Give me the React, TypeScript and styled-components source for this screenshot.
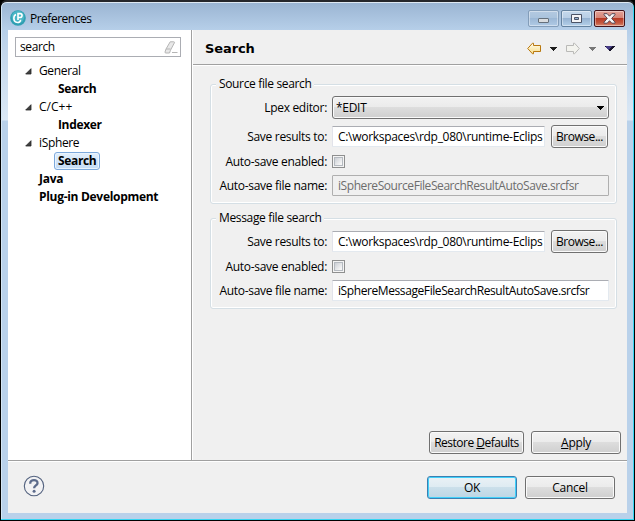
import React from "react";
import styled, { createGlobalStyle, css } from "styled-components";

const Global = createGlobalStyle`
  * { box-sizing: border-box; }
  html, body { margin: 0; padding: 0; background: #000; overflow: hidden; }
  body { font: 12px/16px "Open Sans", "Noto Sans", sans-serif; color: #000; }
`;

const Window = styled.div`
  width: 635px;
  height: 521px;
  border: 1px solid #000;
  border-top: 2px solid #26272b;
  border-radius: 7px 7px 0 0;
  padding: 0 7px 7px 7px;
  display: flex;
  flex-direction: column;
  background: linear-gradient(#9ab4d2, #b6cfe9 28px, #c3d7ec 50px, #dbe8f5 118px, #b9d1ea 119px);
  box-shadow: inset -1px -1px 0 #35d5f2, inset 1px 0 0 #d5e6f4, inset 0 1px 0 #dfe9f3;
`;

const TitleBar = styled.header`
  height: 28px;
  flex: none;
  display: flex;
  align-items: flex-start;
  padding: 0 2px 0 2px;
`;

const Text = styled.span<{ $ls?: number; $bold?: boolean }>`
  letter-spacing: ${(p) => p.$ls ?? -0.3}px;
  font-weight: ${(p) => (p.$bold ? 700 : 400)};
  white-space: nowrap;
`;

const TitleText = styled(Text)`
  margin: 9px auto 0 4px;
`;

const AppIcon = styled.svg`
  margin-top: 8px;
`;

const Captions = styled.div`
  display: flex;
  gap: 2px;
  margin-top: 8px;
`;

const Caption = styled.button<{ $kind: "min" | "max" | "close" }>`
  width: 31px;
  height: 17px;
  padding: 0;
  display: grid;
  place-items: center;
  border-radius: 2px;
  box-shadow: inset 0 0 0 1px rgba(255, 255, 255, 0.4);
  ${(p) =>
    p.$kind === "close"
      ? css`
          border: 1px solid #43141c;
          background: linear-gradient(#e4a196, #d58477 47%, #b83a25 50%, #c55941 80%, #d98b73);
        `
      : p.$kind === "max"
        ? css`
            border: 1px solid #64829f;
            background: linear-gradient(#c5d9ec, #b8cee5 47%, #96b3d2 50%, #b4d0e9);
          `
        : css`
            border: 1px solid #839db9;
            padding-top: 3px;
            background: linear-gradient(#b3c9e0, #aac3dd 47%, #9cb8d6 50%, #b0cae5);
          `}
`;

const Client = styled.div`
  flex: 1;
  display: flex;
  flex-direction: column;
  min-height: 0;
  background: #f0f0f0;
`;

const Main = styled.div`
  height: 431px;
  flex: none;
  display: flex;
  border-bottom: 1px solid #a0a0a0;
`;

const Sidebar = styled.nav`
  width: 184px;
  flex: none;
  padding: 7px 10px 0 7px;
  background: #fff;
  border-right: 1px solid #a0a0a0;
`;

const Filter = styled.div`
  width: 166px;
  height: 20px;
  padding: 0 2px 0 4px;
  border: 1px solid #abadb3;
  display: flex;
  align-items: center;
  justify-content: space-between;
`;

const Tree = styled.ul`
  margin: 5px 0 0;
  padding: 0;
  list-style: none;
`;

const Node = styled.li<{ $depth: number }>`
  height: 18px;
  display: flex;
  align-items: center;
  padding-left: ${(p) => (p.$depth ? 39 : 10)}px;
`;

const Twisty = styled.span`
  width: 10px;
  display: flex;
  padding-top: 1px;
`;

const NodeLabel = styled.span<{ $selected?: boolean }>`
  height: 18px;
  display: flex;
  align-items: center;
  padding: 0 3px;
  border: 1px solid transparent;
  border-radius: 3px;
  ${(p) =>
    p.$selected &&
    css`
      border-color: #7da9dc;
      background: linear-gradient(#e2effc, #c4dcf6);
      box-shadow: inset 0 0 0 1px #eaf4fe;
    `}
`;

const Page = styled.section`
  flex: 1;
  display: flex;
  flex-direction: column;
  border-left: 1px solid #fff;
`;

const PageHeader = styled.div`
  height: 35px;
  flex: none;
  display: flex;
  align-items: center;
  justify-content: space-between;
  padding: 3px 12px 0 12px;
  border-bottom: 1px solid #a0a0a0;
  box-shadow: 0 1px #fff;
`;

const Heading = styled.h1`
  margin: 0;
  font: 700 13px/18px "DejaVu Sans", sans-serif;
  letter-spacing: -0.1px;
`;

const Form = styled.div`
  padding: 19px 10px 0 17px;
  display: flex;
  flex-direction: column;
  gap: 14px;
`;

const Group = styled.fieldset<{ $h: number }>`
  height: ${(p) => p.$h}px;
  margin: 0;
  padding: 0;
  min-width: 0;
  border: 1px solid #d5dfe5;
  border-radius: 3px;
  box-shadow: inset 0 0 0 1px #fff;
  position: relative;
`;

const Legend = styled.div`
  position: absolute;
  top: -9px;
  left: 5px;
  height: 16px;
  padding: 0 3px;
  background: #f0f0f0;
`;

const Rows = styled.div`
  padding: 11px 7px 0 0;
  display: flex;
  flex-direction: column;
`;

const Row = styled.div<{ $h: number }>`
  height: ${(p) => p.$h}px;
  display: grid;
  grid-template-columns: 116px 1fr auto;
  column-gap: 5px;
  align-items: center;
`;

const Label = styled(Text)`
  text-align: right;
`;

const Field = styled.div<{ $disabled?: boolean; $browse?: boolean }>`
  height: 21px;
  padding: 1px ${(p) => (p.$browse ? 1 : 5)}px 0 5px;
  display: flex;
  align-items: center;
  min-width: 0;
  border: 1px solid #e3e9ef;
  border-top-color: #abadb3;
  border-left-color: #e2e3ea;
  border-radius: 1px;
  background: #fff;
  ${(p) =>
    p.$disabled &&
    css`
      color: #6d6d6d;
      background: #f0f0f0;
      border-color: #afafaf;
    `}
`;

const Clip = styled.div`
  flex: 1;
  overflow: hidden;
  white-space: nowrap;
`;

const buttonFace = css`
  border: 1px solid #707070;
  border-radius: 3px;
  background: linear-gradient(#f2f2f2, #ebebeb 49%, #dddddd 50%, #cfcfcf);
  box-shadow: inset 0 0 0 1px #fafafa;
`;

const Button = styled.button<{ $w: number; $primary?: boolean }>`
  ${buttonFace}
  width: ${(p) => p.$w}px;
  height: 23px;
  padding: 0;
  font: inherit;
  color: #000;
  display: flex;
  align-items: center;
  justify-content: center;
  ${(p) =>
    p.$primary &&
    css`
      border-color: #3c7fb1;
      background: linear-gradient(#eaf1f5, #deebf2 49%, #cbdfea 50%, #bcd6e5);
      box-shadow: inset 0 0 0 1px #40d0fa;
    `}
`;

const BrowseButton = styled(Button)`
  margin: 0 1px 0 1px;
`;

const Combo = styled.div`
  ${buttonFace}
  height: 23px;
  grid-column: 2 / 4;
  display: flex;
  align-items: center;
  justify-content: space-between;
  padding: 0 4px 0 3px;
`;

const WideField = styled(Field)`
  grid-column: 2 / 4;
`;

const Check = styled.div`
  width: 13px;
  height: 13px;
  border: 1px solid #8e8f8f;
  background: linear-gradient(135deg, #cbcfd5, #f6f6f6 85%) content-box, #f4f4f4;
  padding: 2px;
  box-shadow: inset 0 0 0 1px #f4f4f4, inset 0 0 0 2px #b5bac0;
`;

const PageActions = styled.div`
  margin-top: auto;
  padding: 0 6px 6px 0;
  display: flex;
  justify-content: flex-end;
  gap: 7px;
`;

const Footer = styled.footer`
  flex: 1;
  border-top: 1px solid #fff;
  display: flex;
  align-items: flex-start;
  padding: 14px 12px 0 15px;
  gap: 8px;
`;

const HelpIcon = styled.svg`
  margin: -1px auto 0 0;
`;

const Arrow = ({ fill = "#000" }: { fill?: string }) => (
  <svg width="7" height="4" viewBox="0 0 7 4" shapeRendering="crispEdges">
    <path d="M0 0h7v1H6v1H5v1H4v1H3V3H2V2H1V1H0z" fill={fill} />
  </svg>
);

const MenuArrow = () => (
  <svg width="10" height="5" viewBox="0 0 10 5" shapeRendering="crispEdges">
    <path d="M0 0h10v1H9v1H8v1H7v1H6v1H4V4H3V3H2V2H1V1H0z" fill="#17142b" />
    <path d="M1 0h6v1H6v1H5v1H4v1H3V3H2V2H1z" fill="#473c86" />
  </svg>
);

const BackArrow = () => (
  <svg width="14" height="13" viewBox="0 0 14 13">
    <defs>
      <linearGradient id="gold" x2="0" y2="1">
        <stop stopColor="#fffdf0" />
        <stop offset="1" stopColor="#f8dc85" />
      </linearGradient>
    </defs>
    <path d="M.7 6.5 5.5 1.2h1v2.3h7v6h-7v2.3h-1z" fill="url(#gold)" stroke="#b9780f" />
  </svg>
);

const ForwardArrow = () => (
  <svg width="14" height="13" viewBox="0 0 14 13">
    <path d="M13.3 6.5 8.5 1.2h-1v2.3h-7v6h7v2.3h1z" fill="#f3f3ee" stroke="#b9b9b7" />
  </svg>
);

const Toolbar = styled.div`
  display: grid;
  grid-template-columns: 14px 7px 14px 7px 10px;
  column-gap: 9px;
  align-items: center;
`;

const tree: { text: string; depth: number; open?: boolean; bold?: boolean; selected?: boolean; ls: number }[] = [
  { text: "General", depth: 0, open: true, ls: -0.35 },
  { text: "Search", depth: 1, bold: true, ls: -0.35 },
  { text: "C/C++", depth: 0, open: true, ls: 0 },
  { text: "Indexer", depth: 1, bold: true, ls: -0.35 },
  { text: "iSphere", depth: 0, open: true, ls: -0.35 },
  { text: "Search", depth: 1, bold: true, selected: true, ls: -0.35 },
  { text: "Java", depth: 0, bold: true, ls: -0.25 },
  { text: "Plug-in Development", depth: 0, bold: true, ls: -0.3 },
];

const PathRow = () => (
  <Row $h={23}>
    <Label>Save results to:</Label>
    <Field $browse>
      <Clip><Text>C:\workspaces\rdp_080\runtime-Eclips</Text></Clip>
    </Field>
    <BrowseButton $w={57}><Text $ls={-0.45}>Browse...</Text></BrowseButton>
  </Row>
);

export default function App() {
  return (
    <>
      <Global />
      <Window>
        <TitleBar>
          <AppIcon width="16" height="16" viewBox="0 0 16 16">
            <circle cx="8" cy="8" r="7.8" fill="#2f9fb2" />
            <circle cx="8" cy="7" r="6.3" fill="#49b5c5" />
            <path d="M6 4.4C3 5.6 3.1 11.4 6.6 12.3c2.3.5 4-.6 4-2.5M8 10V3.6h2.1c2.6 0 2.6 3.9 0 3.9H8" fill="none" stroke="#fff" strokeWidth="1.6" />
          </AppIcon>
          <TitleText $ls={-0.5}>Preferences</TitleText>
          <Captions>
            <Caption $kind="min">
              <svg width="11" height="5"><rect x=".5" y=".5" width="10" height="4" rx=".5" fill="#d9dcdf" stroke="#65707c" /></svg>
            </Caption>
            <Caption $kind="max">
              <svg width="11" height="9"><path d="M.5.5h10v8H.5zM3.5 3.5v2h4v-2z" fill="#f4f4f6" fillRule="evenodd" stroke="#4b5366" /></svg>
            </Caption>
            <Caption $kind="close">
              <svg width="13" height="11" viewBox="0 0 13 11">
                <path d="M1 .7h3.2l2.3 2.5L8.8.7H12v1L8.7 5.4 12 9.2v1H8.8L6.5 7.7l-2.3 2.5H1v-1l3.3-3.8L1 1.7z" fill="#f6f6f7" stroke="#574855" />
              </svg>
            </Caption>
          </Captions>
        </TitleBar>
        <Client>
          <Main>
            <Sidebar>
              <Filter>
                <Text $ls={-0.4}>search</Text>
                <svg width="14" height="13" viewBox="0 0 14 13">
                  <path d="M2 8 6.2.8h3.6q1 0 .6 1L6.5 9.2 5.5 12H2q-1.3 0-1-1z" fill="#e8e8e8" stroke="#b5b5b5" />
                  <path d="M2 8h4.5M8 11.5h5.5" fill="none" stroke="#b5b5b5" />
                </svg>
              </Filter>
              <Tree>
                {tree.map((n, i) => (
                  <Node key={i} $depth={n.depth}>
                    {n.depth === 0 && (
                      <Twisty>
                        {n.open && <svg width="7" height="7"><path d="M6 .7V6H.7z" fill="#404040" stroke="#262626" strokeWidth=".8" /></svg>}
                      </Twisty>
                    )}
                    <NodeLabel $selected={n.selected}><Text $bold={n.bold} $ls={n.ls}>{n.text}</Text></NodeLabel>
                  </Node>
                ))}
              </Tree>
            </Sidebar>
            <Page>
              <PageHeader>
                <Heading>Search</Heading>
                <Toolbar>
                  <BackArrow />
                  <Arrow fill="#1c1c1c" />
                  <ForwardArrow />
                  <Arrow fill="#777" />
                  <MenuArrow />
                </Toolbar>
              </PageHeader>
              <Form>
                <Group $h={120}>
                  <Legend><Text $ls={-0.35}>Source file search</Text></Legend>
                  <Rows>
                    <Row $h={23}>
                      <Label>Lpex editor:</Label>
                      <Combo><Text>*EDIT</Text><Arrow /></Combo>
                    </Row>
                    <Row $h={6} />
                    <PathRow />
                    <Row $h={27}><Label>Auto-save enabled:</Label><Check /></Row>
                    <Row $h={21}>
                      <Label>Auto-save file name:</Label>
                      <WideField $disabled><Text $ls={-0.43}>iSphereSourceFileSearchResultAutoSave.srcfsr</Text></WideField>
                    </Row>
                  </Rows>
                </Group>
                <Group $h={91}>
                  <Legend><Text $ls={-0.35}>Message file search</Text></Legend>
                  <Rows>
                    <PathRow />
                    <Row $h={27}><Label>Auto-save enabled:</Label><Check /></Row>
                    <Row $h={21}>
                      <Label>Auto-save file name:</Label>
                      <WideField><Text $ls={-0.41}>iSphereMessageFileSearchResultAutoSave.srcfsr</Text></WideField>
                    </Row>
                  </Rows>
                </Group>
              </Form>
              <PageActions>
                <Button $w={95}><Text $ls={-0.5}>Restore <u>D</u>efaults</Text></Button>
                <Button $w={90}><Text><u>A</u>pply</Text></Button>
              </PageActions>
            </Page>
          </Main>
          <Footer>
            <HelpIcon width="22" height="22" viewBox="0 0 22 22">
              <circle cx="11" cy="11" r="9.7" fill="#f2f2f4" stroke="#52617e" strokeWidth="1.1" />
              <path d="M7.2 8.7C7 3.8 15 4 14.5 8.3c-.2 2.1-3.4 2.3-3.4 5" fill="none" stroke="#5c6b8b" strokeWidth="2.3" />
              <circle cx="11.1" cy="16.3" r="1.5" fill="#5c6b8b" />
            </HelpIcon>
            <Button $w={90} $primary><Text>OK</Text></Button>
            <Button $w={90}><Text>Cancel</Text></Button>
          </Footer>
        </Client>
      </Window>
    </>
  );
}
